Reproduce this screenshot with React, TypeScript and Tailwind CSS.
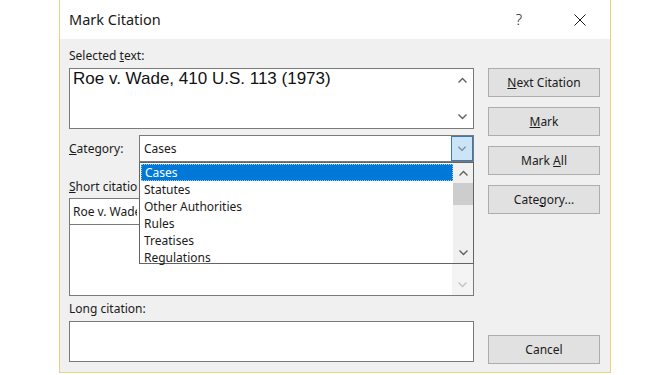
import React from "react";

const font = { fontFamily: '"Noto Sans", "Open Sans", sans-serif' };

const Chevron = ({ dir, color = "#606060", w = 9 }: { dir: "up" | "down"; color?: string; w?: number }) => (
  <svg width={w} height={6} viewBox="0 0 9 6" className="block">
    {dir === "up" ? (
      <polyline points="0.5,5.5 4.5,1.5 8.5,5.5" fill="none" stroke={color} strokeWidth="1.4" />
    ) : (
      <polyline points="0.5,0.5 4.5,4.5 8.5,0.5" fill="none" stroke={color} strokeWidth="1.4" />
    )}
  </svg>
);

const Btn = ({ children, className = "" }: { children: React.ReactNode; className?: string }) => (
  <div
    className={`flex h-[29px] w-[112px] items-center justify-center border border-[#adadad] bg-[#e1e1e1] text-[12px] text-[#1a1a1a] ${className}`}
  >
    {children}
  </div>
);

const items = ["Cases", "Statutes", "Other Authorities", "Rules", "Treatises", "Regulations"];

export default function App() {
  return (
    <div className="h-[375px] w-[670px] overflow-hidden bg-white" style={font}>
      <div className="ml-[59px] flex h-[373px] w-[552px] flex-col border-x border-b border-[#ecd27a]">
        {/* title bar */}
        <div className="flex h-[39px] items-center bg-white pl-[9px] text-[14.5px] text-[#1a1a1a]">
          <span>Mark Citation</span>
          <span className="ml-auto mr-[52px] text-[15px] font-light">?</span>
          <svg width="12" height="12" viewBox="0 0 12 12" className="mr-[24px]">
            <line x1="0.5" y1="0.5" x2="11.5" y2="11.5" stroke="#1a1a1a" strokeWidth="1" />
            <line x1="11.5" y1="0.5" x2="0.5" y2="11.5" stroke="#1a1a1a" strokeWidth="1" />
          </svg>
        </div>

        {/* body */}
        <div className="flex flex-1 gap-[14px] bg-[#f0f0f0] pl-[9px] pt-[8px] text-[12px] text-[#1a1a1a]">
          {/* left column */}
          <div className="relative flex w-[405px] flex-col">
            <div className="h-[18px] leading-[18px]">
              Selected <span className="underline">t</span>ext:
            </div>
            <div className="mt-[3px] flex h-[61px] border border-[#7a7a7a] bg-white">
              <div
                className="flex-1 pl-[3px] text-[17px] leading-[20px] text-[#111]"
                style={{ fontFamily: '"Liberation Sans", Arial, sans-serif' }}
              >
                Roe v. Wade, 410 U.S. 113 (1973)
              </div>
              <div className="flex w-[21px] flex-col items-center justify-between py-[8px]">
                <Chevron dir="up" />
                <Chevron dir="down" />
              </div>
            </div>

            <div className="mt-[6px] flex h-[27px] items-center">
              <div className="w-[70px]">
                <span className="underline">C</span>ategory:
              </div>
              <div className="flex h-[27px] flex-1 border border-[#7a7a7a] bg-white">
                <div className="flex flex-1 items-center pl-[4px]">Cases</div>
                <div className="flex w-[22px] items-center justify-center border border-[#3d7ab5] bg-[#cce4f7]">
                  <Chevron dir="down" color="#7a8894" w={8} />
                </div>
              </div>
            </div>

            {/* short citation: partly hidden by the open list */}
            <div className="mt-[16px] h-[18px] w-[69px] overflow-hidden whitespace-nowrap leading-[18px]">
              <span className="underline">S</span>hort citation:
            </div>
            <div className="mt-[2px] flex h-[98px] flex-col border border-[#7a7a7a] bg-white">
              <div className="flex h-[26px] items-center border-b border-[#7a7a7a] pl-[3px]">
                <span className="w-[64px] overflow-hidden whitespace-nowrap">Roe v. Wade, 410 U.S. 113 (1973)</span>
              </div>
              <div className="flex flex-1">
                <div className="flex-1" />
                <div className="flex w-[21px] flex-col items-center justify-end bg-[#f4f4f4] pb-[7px]">
                  <Chevron dir="down" color="#c4c4c4" />
                </div>
              </div>
            </div>

            <div className="mt-[4px] h-[18px] leading-[18px]">Long citation:</div>
            <div className="mt-[3px] h-[41px] border border-[#7a7a7a] bg-white" />

            {/* open dropdown list */}
            <div className="absolute left-[70px] top-[115px] flex h-[102px] w-[335px] border border-[#646464] bg-white">
              <div className="flex-1 pt-[1px]">
                {items.map((it, i) => (
                  <div
                    key={it}
                    className={
                      i === 0
                        ? "ml-[1px] h-[17px] border border-dotted border-[#9fc8ee] bg-[#0078d7] pl-[3px] leading-[15px] text-white"
                        : "h-[17px] pl-[4px] leading-[17px]"
                    }
                  >
                    {it}
                  </div>
                ))}
              </div>
              <div className="flex w-[20px] flex-col items-center bg-[#f0f0f0]">
                <div className="flex h-[17px] items-center pt-[2px]">
                  <Chevron dir="up" />
                </div>
                <div className="mt-[3px] h-[22px] w-full bg-[#cdcdcd]" />
                <div className="mt-auto flex h-[17px] items-center pb-[4px]">
                  <Chevron dir="down" />
                </div>
              </div>
            </div>
          </div>

          {/* right column */}
          <div className="flex w-[112px] flex-col pt-[21px]">
            <Btn>
              <span className="underline">N</span>ext Citation
            </Btn>
            <Btn className="mt-[10px]">
              <span className="underline">M</span>ark
            </Btn>
            <Btn className="mt-[10px]">
              <span>
                Mark <span className="underline">A</span>ll
              </span>
            </Btn>
            <Btn className="mt-[10px]">
              Cate<span className="underline">g</span>ory...
            </Btn>
            <Btn className="mt-[121px] h-[28px]">Cancel</Btn>
          </div>
        </div>
      </div>
    </div>
  );
}
